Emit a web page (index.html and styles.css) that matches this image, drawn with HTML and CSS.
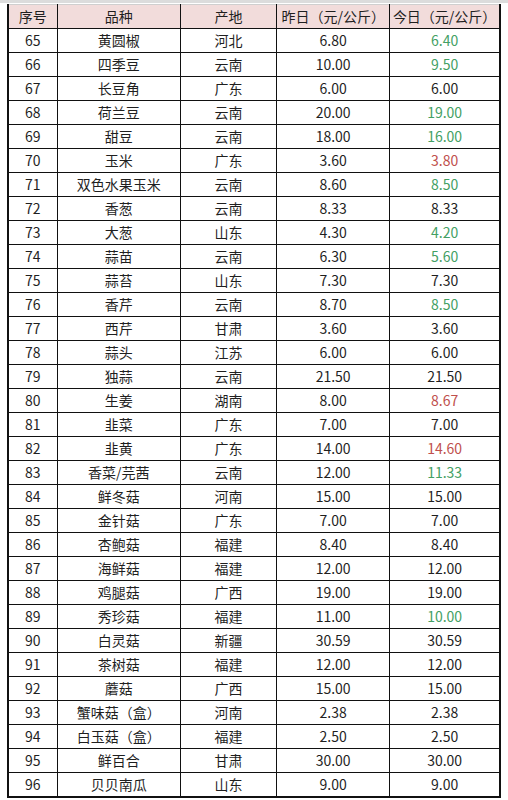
FILE: index.html
```html
<!DOCTYPE html>
<html lang="zh">
<head>
<meta charset="utf-8">
<link rel="stylesheet" href="styles.css">
</head>
<body>
<div class="topbar"></div>
<table class="price">
<colgroup><col class="c1"><col class="c2"><col class="c3"><col class="c4"><col class="c5"></colgroup>
<thead>
<tr><th>序号</th><th>品种</th><th>产地</th><th>昨日（元/公斤）</th><th>今日（元/公斤）</th></tr>
</thead>
<tbody>
<tr><td>65</td><td>黄圆椒</td><td>河北</td><td>6.80</td><td class="dn">6.40</td></tr>
<tr><td>66</td><td>四季豆</td><td>云南</td><td>10.00</td><td class="dn">9.50</td></tr>
<tr><td>67</td><td>长豆角</td><td>广东</td><td>6.00</td><td>6.00</td></tr>
<tr><td>68</td><td>荷兰豆</td><td>云南</td><td>20.00</td><td class="dn">19.00</td></tr>
<tr><td>69</td><td>甜豆</td><td>云南</td><td>18.00</td><td class="dn">16.00</td></tr>
<tr><td>70</td><td>玉米</td><td>广东</td><td>3.60</td><td class="up">3.80</td></tr>
<tr><td>71</td><td>双色水果玉米</td><td>云南</td><td>8.60</td><td class="dn">8.50</td></tr>
<tr><td>72</td><td>香葱</td><td>云南</td><td>8.33</td><td>8.33</td></tr>
<tr><td>73</td><td>大葱</td><td>山东</td><td>4.30</td><td class="dn">4.20</td></tr>
<tr><td>74</td><td>蒜苗</td><td>云南</td><td>6.30</td><td class="dn">5.60</td></tr>
<tr><td>75</td><td>蒜苔</td><td>山东</td><td>7.30</td><td>7.30</td></tr>
<tr><td>76</td><td>香芹</td><td>云南</td><td>8.70</td><td class="dn">8.50</td></tr>
<tr><td>77</td><td>西芹</td><td>甘肃</td><td>3.60</td><td>3.60</td></tr>
<tr><td>78</td><td>蒜头</td><td>江苏</td><td>6.00</td><td>6.00</td></tr>
<tr><td>79</td><td>独蒜</td><td>云南</td><td>21.50</td><td>21.50</td></tr>
<tr><td>80</td><td>生姜</td><td>湖南</td><td>8.00</td><td class="up">8.67</td></tr>
<tr><td>81</td><td>韭菜</td><td>广东</td><td>7.00</td><td>7.00</td></tr>
<tr><td>82</td><td>韭黄</td><td>广东</td><td>14.00</td><td class="up">14.60</td></tr>
<tr><td>83</td><td>香菜/芫茜</td><td>云南</td><td>12.00</td><td class="dn">11.33</td></tr>
<tr><td>84</td><td>鲜冬菇</td><td>河南</td><td>15.00</td><td>15.00</td></tr>
<tr><td>85</td><td>金针菇</td><td>广东</td><td>7.00</td><td>7.00</td></tr>
<tr><td>86</td><td>杏鲍菇</td><td>福建</td><td>8.40</td><td>8.40</td></tr>
<tr><td>87</td><td>海鲜菇</td><td>福建</td><td>12.00</td><td>12.00</td></tr>
<tr><td>88</td><td>鸡腿菇</td><td>广西</td><td>19.00</td><td>19.00</td></tr>
<tr><td>89</td><td>秀珍菇</td><td>福建</td><td>11.00</td><td class="dn">10.00</td></tr>
<tr><td>90</td><td>白灵菇</td><td>新疆</td><td>30.59</td><td>30.59</td></tr>
<tr><td>91</td><td>茶树菇</td><td>福建</td><td>12.00</td><td>12.00</td></tr>
<tr><td>92</td><td>蘑菇</td><td>广西</td><td>15.00</td><td>15.00</td></tr>
<tr><td>93</td><td>蟹味菇（盒）</td><td>河南</td><td>2.38</td><td>2.38</td></tr>
<tr><td>94</td><td>白玉菇（盒）</td><td>福建</td><td>2.50</td><td>2.50</td></tr>
<tr><td>95</td><td>鲜百合</td><td>甘肃</td><td>30.00</td><td>30.00</td></tr>
<tr><td>96</td><td>贝贝南瓜</td><td>山东</td><td>9.00</td><td>9.00</td></tr>
</tbody>
</table>
</body>
</html>
```
FILE: styles.css
```css
html, body {
  margin: 0;
  padding: 0;
  background: #ffffff;
}
body {
  font-family: "Noto Sans CJK SC", "Noto Sans", sans-serif;
  color: #1f1f1f;
}
.topbar {
  height: 3px;
  background: #dcdcdc;
  margin-bottom: 1px;
}
.price {
  margin-left: 7px;
  border-collapse: collapse;
  table-layout: fixed;
  width: 494px;
  border-left: 2px solid #111;
  border-right: 2px solid #111;
  border-bottom: 2px solid #111;
}
.c1 { width: 49px; }
.c2 { width: 123px; }
.c3 { width: 96px; }
.c4 { width: 113px; }
.c5 { width: 110px; }
.price th, .price td {
  height: 23px;
  padding: 0;
  text-align: center;
  font-size: 14px;
  line-height: 23px;
  font-weight: normal;
  border: 1px solid #111;
  white-space: nowrap;
  overflow: hidden;
}
.price thead th {
  background: #f2dcdb;
  border-top: 1px solid #cfcfcf;
  height: 23px;
  line-height: 23px;
}
.price td.dn { color: #43a064; }
.price td.up { color: #c0504d; }
```
